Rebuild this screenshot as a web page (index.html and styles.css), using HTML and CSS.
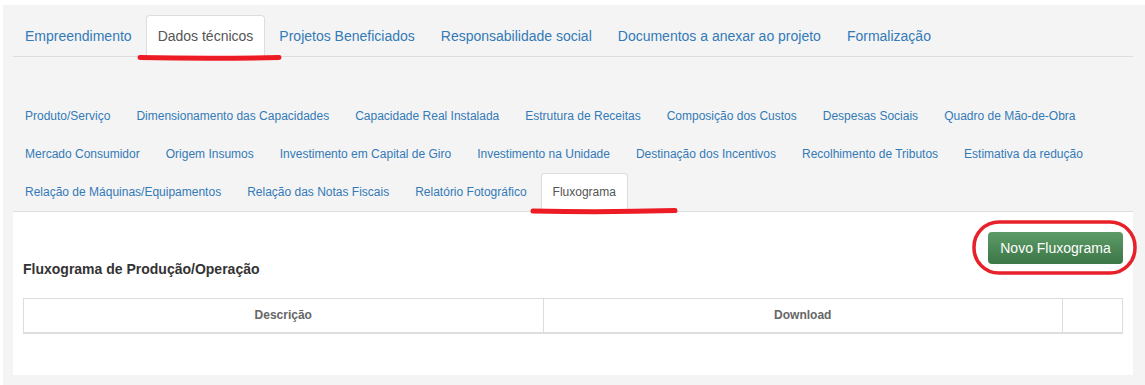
FILE: index.html
```html
<!DOCTYPE html>
<html lang="pt-BR">
<head>
<meta charset="utf-8">
<title>Fluxograma</title>
<link rel="stylesheet" href="styles.css">
</head>
<body>
<div class="panel">
  <ul class="tabs main-tabs">
    <li><a href="#">Empreendimento</a></li>
    <li class="active"><a href="#">Dados técnicos</a></li>
    <li><a href="#">Projetos Beneficiados</a></li>
    <li><a href="#">Responsabilidade social</a></li>
    <li><a href="#">Documentos a anexar ao projeto</a></li>
    <li><a href="#">Formalização</a></li>
  </ul>
  <ul class="tabs sub-tabs">
    <li><a href="#">Produto/Serviço</a></li>
    <li><a href="#">Dimensionamento das Capacidades</a></li>
    <li><a href="#">Capacidade Real Instalada</a></li>
    <li><a href="#">Estrutura de Receitas</a></li>
    <li><a href="#">Composição dos Custos</a></li>
    <li><a href="#">Despesas Sociais</a></li>
    <li><a href="#">Quadro de Mão-de-Obra</a></li>
    <li><a href="#">Mercado Consumidor</a></li>
    <li><a href="#">Origem Insumos</a></li>
    <li><a href="#">Investimento em Capital de Giro</a></li>
    <li><a href="#">Investimento na Unidade</a></li>
    <li><a href="#">Destinação dos Incentivos</a></li>
    <li><a href="#">Recolhimento de Tributos</a></li>
    <li><a href="#">Estimativa da redução</a></li>
    <li><a href="#">Relação de Máquinas/Equipamentos</a></li>
    <li><a href="#">Relação das Notas Fiscais</a></li>
    <li><a href="#">Relatório Fotográfico</a></li>
    <li class="active"><a href="#">Fluxograma</a></li>
  </ul>
  <div class="content">
    <div class="content-head">
      <h4 class="title">Fluxograma de Produção/Operação</h4>
      <button class="btn-success" type="button">Novo Fluxograma</button>
    </div>
    <table class="grid">
      <thead>
        <tr>
          <th class="col-desc">Descrição</th>
          <th class="col-down">Download</th>
          <th class="col-act"></th>
        </tr>
      </thead>
    </table>
  </div>
</div>
<svg class="marks" width="1145" height="385" viewBox="0 0 1145 385" aria-hidden="true">
  <path d="M140 57.5 Q210 59 279 57.5" fill="none" stroke="#ed1c24" stroke-width="5" stroke-linecap="round"/>
  <path d="M533 211 Q605 212.5 675 210.5" fill="none" stroke="#ed1c24" stroke-width="5" stroke-linecap="round"/>
  <rect x="974" y="222" width="161" height="51" rx="25" ry="25" fill="none" stroke="#e8202a" stroke-width="3.5"/>
</svg>
</body>
</html>
```
FILE: styles.css
```css
* {
  box-sizing: border-box;
}

html, body {
  margin: 0;
  padding: 0;
  background: #ffffff;
}

body {
  font-family: "Liberation Sans", Arial, sans-serif;
  color: #333333;
  padding: 5px 0 0 3px;
  position: relative;
  width: 1145px;
  height: 385px;
  overflow: hidden;
}

.panel {
  background: #f4f4f4;
  width: 1142px;
  padding: 10px 12px 10px 10px;
}

.tabs {
  list-style: none;
  margin: 0;
  padding: 0;
  display: flex;
  flex-wrap: wrap;
  border-bottom: 1px solid #dddddd;
}

.tabs li {
  margin-right: 2px;
  margin-bottom: -1px;
}

.tabs a {
  display: block;
  text-decoration: none;
  color: #337ab7;
  padding: 10px 11px;
  border: 1px solid transparent;
  border-radius: 4px 4px 0 0;
}

.tabs li.active a {
  color: #555555;
  background: #ffffff;
  border-color: #dddddd #dddddd transparent #dddddd;
}

.main-tabs a {
  font-size: 14px;
  line-height: 20px;
}

.sub-tabs {
  margin-top: 40px;
}

.sub-tabs a {
  font-size: 12px;
  line-height: 17px;
}

.content {
  background: #ffffff;
  padding: 20px 10px 41px 10px;
}

.content-head {
  display: flex;
  justify-content: space-between;
  align-items: flex-start;
}

.title {
  margin: 27px 0 0 0;
  font-size: 14px;
  line-height: 20px;
  font-weight: bold;
  color: #333333;
}

.btn-success {
  font-family: "Liberation Sans", Arial, sans-serif;
  font-size: 14px;
  line-height: 20px;
  color: #ffffff;
  padding: 6px 12px;
  border: 0;
  border-radius: 4px;
  background: linear-gradient(#5c9b67, #3c7747);
  height: 32px;
  width: 135px;
  cursor: pointer;
}

.grid {
  width: 100%;
  margin-top: 19px;
  border-collapse: collapse;
  border: 1px solid #dddddd;
}

.grid th {
  border: 1px solid #dddddd;
  border-bottom-width: 2px;
  padding: 8px;
  font-size: 12px;
  line-height: 16px;
  font-weight: bold;
  color: #666666;
  text-align: center;
  height: 34px;
}

.col-desc {
  width: 520px;
}

.col-down {
  width: 520px;
}

.col-act {
  width: 60px;
}

.marks {
  position: absolute;
  left: 0;
  top: 0;
  pointer-events: none;
}
```
